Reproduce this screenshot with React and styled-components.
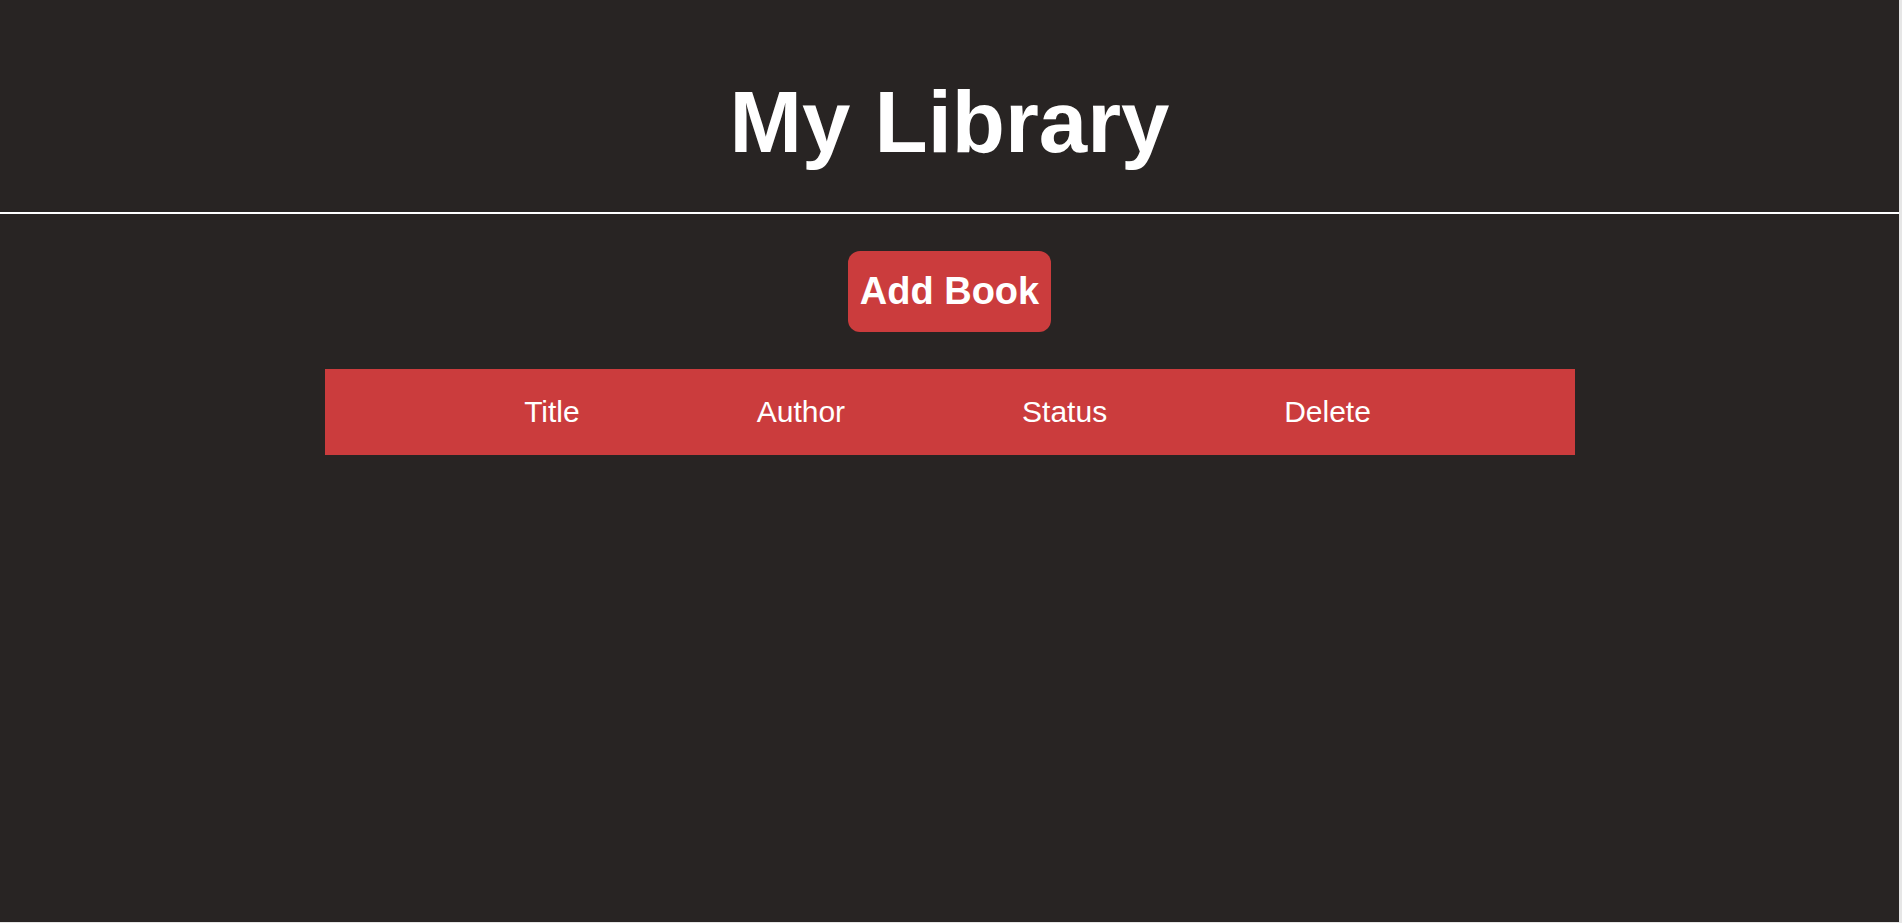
import React from 'react'
import styled, { createGlobalStyle } from 'styled-components'

const GlobalStyle = createGlobalStyle`
  html, body {
    margin: 0;
    padding: 0;
    background: #e6e6e6;
  }
  * {
    box-sizing: border-box;
  }
`

const columns = ['Title', 'Author', 'Status', 'Delete']

const App = () => {
  return (
    <>
      <GlobalStyle />
      <StyledApp>
        <Header>
          <h1>My Library</h1>
        </Header>

        <Main>
          <AddButton>Add Book</AddButton>

          <BookTable>
            <HeaderRow>
              {columns.map((col) => (
                <HeaderCell key={col}>{col}</HeaderCell>
              ))}
            </HeaderRow>
          </BookTable>
        </Main>
      </StyledApp>
    </>
  )
}

const StyledApp = styled.div`
  width: 1899px;
  height: 922px;
  background: #282423;
  color: #fff;
  font-family: 'Liberation Sans', Arial, sans-serif;
`

const Header = styled.header`
  height: 214px;
  padding-top: 72px;
  border-bottom: 2px solid #fff;
  text-align: center;

  & > h1 {
    margin: 0;
    font-size: 87px;
    font-weight: 700;
    line-height: normal;
  }
`

const Main = styled.main`
  display: flex;
  flex-direction: column;
  align-items: center;
  padding-top: 37px;
  gap: 37px;
`

const AddButton = styled.button`
  background: #cb3c3d;
  color: #fff;
  border: none;
  border-radius: 12px;
  padding: 18px 12px;
  font-family: 'Liberation Sans', Arial, sans-serif;
  font-size: 38px;
  font-weight: 700;
  line-height: 45px;
  cursor: pointer;
`

const BookTable = styled.div`
  width: 1250px;
  height: 86px;
  background: #cb3c3d;
  display: flex;
  align-items: center;
  justify-content: center;
`

const HeaderRow = styled.div`
  display: flex;
  padding-right: 4px;
`

const HeaderCell = styled.div`
  padding: 0 88.5px;
  font-size: 30px;
  line-height: normal;
`

export default App
